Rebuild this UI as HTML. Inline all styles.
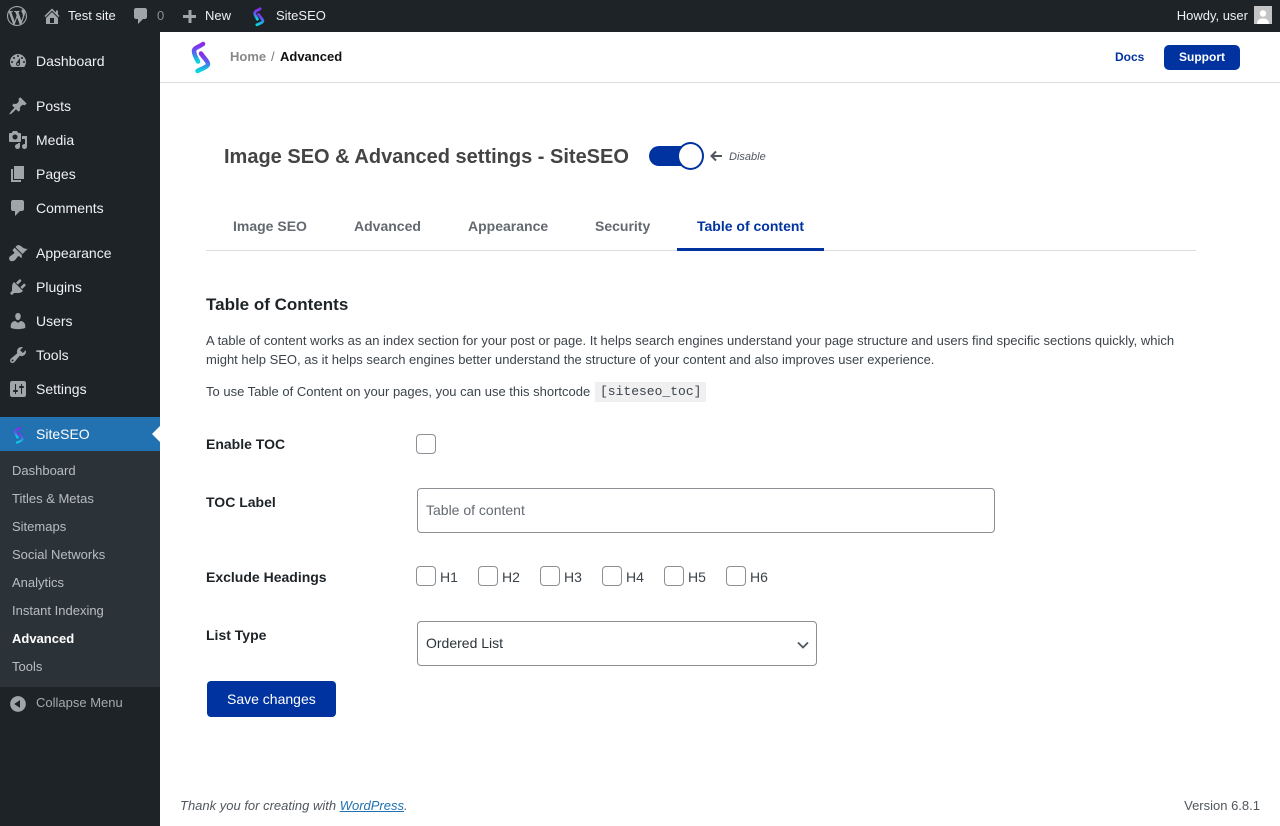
<!DOCTYPE html>
<html lang="en"><head><meta charset="utf-8"><title>SiteSEO</title>
<style>
html,body{margin:0;padding:0;width:1280px;height:826px;overflow:hidden;background:#fff;font-family:"Liberation Sans",sans-serif;}
.t{position:absolute;white-space:nowrap;line-height:20px;}
svg{position:absolute;display:block;}
.bar{position:absolute;left:0;top:0;width:1280px;height:32px;background:#1d2327;}
.side{position:absolute;left:0;top:32px;width:160px;height:794px;background:#1d2327;}
.b{font-size:13px;color:#f0f0f1;}
.m{font-size:14px;color:#f0f0f1;left:36px;}
.s{font-size:13px;color:rgba(240,246,252,.7);left:12px;}
.i{fill:#a0a5aa;}
.tab{font-size:14px;font-weight:700;color:#646970;}
.lab{font-size:14px;font-weight:700;color:#1d2327;left:206px;}
.cb{position:absolute;width:18px;height:18px;border:1px solid #8c8f94;border-radius:4px;background:#fff;}
.h{font-size:14px;color:#3c434a;}
.box{position:absolute;box-sizing:border-box;border:1px solid #8c8f94;border-radius:4px;background:#fff;}
.p{font-size:13px;color:#3c434a;left:206px;}
</style></head><body>
<svg width="0" height="0" style="position:absolute"><defs>
<linearGradient id="g" x1="0" y1="0" x2="0" y2="1"><stop offset="0" stop-color="#8a2be8"/><stop offset=".45" stop-color="#5a5cf0"/><stop offset="1" stop-color="#05d8e0"/></linearGradient>
</defs></svg>

<div class="bar"></div>
<svg style="left:7px;top:6px" width="20" height="20" viewBox="0 0 20 20"><path class="i" d="M20 10c0-5.51-4.49-10-10-10C4.48 0 0 4.49 0 10c0 5.52 4.48 10 10 10 5.51 0 10-4.48 10-10zM7.78 15.37L4.37 6.22c.55-.02 1.17-.08 1.17-.08.5-.06.44-1.13-.06-1.11 0 0-1.45.11-2.37.11-.18 0-.37 0-.58-.01C4.12 2.69 6.87 1.11 10 1.11c2.33 0 4.45.87 6.05 2.34-.68-.11-1.65.39-1.65 1.58 0 .74.45 1.36.9 2.1.35.61.55 1.36.55 2.46 0 1.49-1.4 5-1.4 5l-3.03-8.37c.54-.02.82-.17.82-.17.5-.05.44-1.25-.06-1.22 0 0-1.44.12-2.38.12-.87 0-2.33-.12-2.33-.12-.5-.03-.56 1.2-.06 1.22l.92.08 1.26 3.41zM17.41 10c.24-.64.74-1.87.43-4.25.7 1.29 1.05 2.71 1.05 4.25 0 3.29-1.73 6.24-4.4 7.78.97-2.59 1.94-5.2 2.92-7.78zM6.1 18.09C3.12 16.65 1.11 13.53 1.11 10c0-1.3.23-2.48.72-3.59C3.25 10.3 4.67 14.2 6.1 18.09zm4.03-6.63l2.58 6.98c-.86.29-1.76.45-2.71.45-.79 0-1.57-.11-2.29-.33.81-2.38 1.62-4.74 2.42-7.1z"/></svg>
<svg style="left:42px;top:6px" width="20" height="20" viewBox="0 0 20 20"><path class="i" fill-rule="evenodd" d="M16 8.5l1.53 1.53-1.06 1.06L10 4.62l-6.47 6.47-1.06-1.06L10 2.5l4 4v-2h2v4zm-6-2.46l6 5.99V18H4v-5.97zM12 17v-5H8v5h4z"/></svg>
<div class="t b" style="left:68px;top:6px">Test site</div>
<svg style="left:131px;top:6px" width="20" height="20" viewBox="0 0 20 20"><path class="i" d="M5 2h9c1.1 0 2 .9 2 2v7c0 1.1-.9 2-2 2h-2l-5 5v-5H5c-1.1 0-2-.9-2-2V4c0-1.1.9-2 2-2z"/></svg>
<div class="t b" style="left:157px;top:6px;color:#8c8f94">0</div>
<svg style="left:180px;top:7px" width="20" height="20" viewBox="0 0 20 20"><path class="i" d="M11.500 3v5h4.500v3h-4.500v5h-3v-5H3V8h5.500V3z"/></svg>
<div class="t b" style="left:205px;top:6px">New</div>
<svg style="left:250px;top:6px" width="17" height="21" viewBox="0 0 30 38"><g fill="none" stroke="url(#g)" stroke-width="5" stroke-linecap="round" stroke-linejoin="round"><path d="M18 5 C14 8 8 9 8 13 C8 16 11 20 13 24"/><path d="M15 15 C17 19 23 24 23 27 C23 30 16 32 12 34"/></g></svg>
<div class="t b" style="left:276px;top:6px">SiteSEO</div>
<div class="t b" style="right:32px;top:6px">Howdy, user</div>
<div style="position:absolute;left:1254px;top:6px;width:18px;height:18px;background:#c4c4c4;overflow:hidden;border:0">
  <svg style="left:0;top:0" width="18" height="18" viewBox="0 0 18 18"><circle cx="9" cy="7.500" r="3.200" fill="#fff"/><path d="M3 18c0-4 2.500-5.500 6-5.500s6 1.500 6 5.500z" fill="#fff"/></svg>
</div>

<div class="side"></div>
<svg style="left:8px;top:51px" width="20" height="20" viewBox="0 0 20 20"><path class="i" fill-rule="evenodd" d="M3.760 16h12.480c1.100-1.370 1.760-3.110 1.760-5 0-4.420-3.580-8-8-8s-8 3.580-8 8c0 1.890.66 3.630 1.760 5zM10 4c.55 0 1 .45 1 1s-.45 1-1 1-1-.45-1-1 .45-1 1-1zM6 6c.55 0 1 .45 1 1s-.45 1-1 1-1-.45-1-1 .45-1 1-1zm8 0c.55 0 1 .45 1 1s-.45 1-1 1-1-.45-1-1 .45-1 1-1zm-5.370 5.550L12 7v6c0 1.100-.9 2-2 2s-2-.9-2-2c0-.57.24-1.080.63-1.450zM4 10c.55 0 1 .45 1 1s-.45 1-1 1-1-.45-1-1 .45-1 1-1zm12 0c.55 0 1 .45 1 1s-.45 1-1 1-1-.45-1-1 .45-1 1-1zm-5 3c0-.55-.45-1-1-1s-1 .45-1 1 .45 1 1 1 1-.45 1-1z"/></svg>
<div class="t m" style="top:51px">Dashboard</div>
<svg style="left:8px;top:96px" width="20" height="20" viewBox="0 0 20 20"><path class="i" d="M10.440 3.020l1.820-1.820 6.360 6.350-1.830 1.820c-1.050-.68-2.480-.57-3.410.36l-.75.75c-.92.93-1.040 2.350-.35 3.410l-1.830 1.820-2.410-2.410-2.800 2.790c-.42.42-3.380 2.710-3.800 2.290s1.860-3.390 2.280-3.810l2.790-2.790L4.100 9.360l1.830-1.820c1.050.69 2.480.57 3.400-.36l.75-.75c.93-.92 1.050-2.350.36-3.410z"/></svg>
<div class="t m" style="top:96px">Posts</div>
<svg style="left:8px;top:130px" width="20" height="20" viewBox="0 0 20 20"><path class="i" fill-rule="evenodd" d="M13 11V4c0-.55-.45-1-1-1h-1.670L9 1H5L3.670 3H2c-.55 0-1 .45-1 1v7c0 .55.45 1 1 1h10c.55 0 1-.45 1-1zM7 4.500c1.380 0 2.500 1.120 2.500 2.500S8.380 9.500 7 9.500 4.500 8.380 4.500 7 5.620 4.500 7 4.500zM14 6h5v10.500c0 1.380-1.120 2.500-2.500 2.500S14 17.880 14 16.500s1.120-2.500 2.500-2.500c.17 0 .34.02.5.05V9h-3V6zm-4 8.050V13h2v3.500c0 1.380-1.120 2.500-2.500 2.500S7 17.880 7 16.500 8.120 14 9.500 14c.17 0 .34.02.5.05z"/></svg>
<div class="t m" style="top:130px">Media</div>
<svg style="left:8px;top:164px" width="20" height="20" viewBox="0 0 20 20"><path class="i" d="M6 15V2h10v13H6zm-1 1h8v2H3V5h2v11z"/></svg>
<div class="t m" style="top:164px">Pages</div>
<svg style="left:8px;top:198px" width="20" height="20" viewBox="0 0 20 20"><path class="i" d="M5 2h9c1.100 0 2 .9 2 2v7c0 1.100-.9 2-2 2h-2l-5 5v-5H5c-1.100 0-2-.9-2-2V4c0-1.100.9-2 2-2z"/></svg>
<div class="t m" style="top:198px">Comments</div>
<svg style="left:8px;top:243px" width="20" height="20" viewBox="0 0 20 20"><path class="i" d="M14.480 11.060L7.410 3.990l1.500-1.500c.5-.56 2.300-.47 3.510.32 1.210.8 1.430 1.280 2.910 2.100 1.180.64 2.450 1.260 4.450.85zm-.71.71L6.700 4.700 4.930 6.470c-.39.39-.39 1.020 0 1.410l1.060 1.060c.39.39.39 1.030 0 1.420-.6.6-1.430 1.110-2.210 1.690-.35.26-.7.53-1.010.84C1.430 13.230.99 14.780 1.200 16.070c.1.640.38 1.120.67 1.430.31.31.79.59 1.430.67 1.290.21 2.840-.23 4.170-1.570.31-.31.58-.66.84-1.010.58-.78 1.090-1.610 1.690-2.210.39-.39 1.030-.39 1.420 0l1.060 1.060c.39.39 1.020.39 1.410 0z"/></svg>
<div class="t m" style="top:243px">Appearance</div>
<svg style="left:8px;top:277px" width="20" height="20" viewBox="0 0 20 20"><path class="i" d="M13.110 4.360L9.870 7.600 8 5.730l3.240-3.240c.35-.34 1.050-.2 1.560.32.52.51.66 1.210.31 1.550zm-8 1.770l.91-1.120 9.010 9.010-1.190.84c-.71.71-2.630 1.160-3.820 1.160H6.140L4.900 17.260c-.59.59-1.540.59-2.120 0-.59-.58-.59-1.530 0-2.120l1.240-1.240v-3.880c0-1.130.4-3.190 1.090-3.890zm7.260 3.970l3.240-3.240c.34-.35 1.040-.21 1.550.31.52.51.66 1.210.31 1.550l-3.240 3.250z"/></svg>
<div class="t m" style="top:277px">Plugins</div>
<svg style="left:8px;top:311px" width="20" height="20" viewBox="0 0 20 20"><path class="i" d="M10 9.250c-2.270 0-2.730-3.440-2.730-3.440C7 4.020 7.820 2 9.970 2c2.160 0 2.980 2.020 2.710 3.810 0 0-.41 3.440-2.680 3.440zm0 2.570L12.720 10c2.390 0 4.520 2.330 4.520 4.530v2.490s-3.650 1.130-7.240 1.130c-3.650 0-7.240-1.130-7.240-1.130v-2.490c0-2.250 1.940-4.480 4.470-4.480z"/></svg>
<div class="t m" style="top:311px">Users</div>
<svg style="left:8px;top:345px" width="20" height="20" viewBox="0 0 20 20"><path class="i" fill-rule="evenodd" d="M16.680 9.770c-1.340 1.340-3.300 1.670-4.950.99l-5.410 6.520c-.99.99-2.590.99-3.580 0s-.99-2.590 0-3.570l6.520-5.420c-.68-1.650-.35-3.610.99-4.950 1.280-1.280 3.120-1.620 4.720-1.060l-2.890 2.890 2.820 2.820 2.860-2.870c.53 1.580.18 3.390-1.080 4.650zM3.810 16.210c.4.39 1.040.39 1.430 0 .4-.4.4-1.040 0-1.430-.39-.4-1.030-.4-1.430 0-.39.39-.39 1.030 0 1.430z"/></svg>
<div class="t m" style="top:345px">Tools</div>
<svg style="left:8px;top:379px" width="20" height="20" viewBox="0 0 20 20"><path class="i" fill-rule="evenodd" d="M18 16V4c0-1.100-.9-2-2-2H4c-1.100 0-2 .9-2 2v12c0 1.100.9 2 2 2h12c1.100 0 2-.9 2-2zM8 11h1c.55 0 1 .45 1 1s-.45 1-1 1H8v1.500c0 .28-.22.5-.5.5s-.5-.22-.5-.5V13H6c-.55 0-1-.45-1-1s.45-1 1-1h1V5.500c0-.28.22-.5.5-.5s.5.22.5.5V11zm5-2h-1c-.55 0-1-.45-1-1s.45-1 1-1h1V5.500c0-.28.22-.5.5-.5s.5.22.5.5V7h1c.55 0 1 .45 1 1s-.45 1-1 1h-1v5.500c0 .28-.22.5-.5.5s-.5-.22-.5-.5V9z"/></svg>
<div class="t m" style="top:379px">Settings</div>
<div style="position:absolute;left:0;top:417px;width:160px;height:34px;background:#2271b1"></div>
<svg style="left:11px;top:425px" width="15" height="20" viewBox="0 0 30 38"><g fill="none" stroke="url(#g)" stroke-width="4.500" stroke-linecap="round" stroke-linejoin="round"><path d="M18 5 C14 8 8 9 8 13 C8 16 11 20 13 24"/><path d="M15 15 C17 19 23 24 23 27 C23 30 16 32 12 34"/></g></svg>
<div class="t m" style="top:424px;color:#fff">SiteSEO</div>
<div style="position:absolute;left:152px;top:426px;width:0;height:0;border:8px solid transparent;border-left:0;border-right-color:#fff"></div>
<div style="position:absolute;left:0;top:451px;width:160px;height:236px;background:#2c3338"></div>
<div class="t s" style="top:461px">Dashboard</div>
<div class="t s" style="top:489px">Titles &amp; Metas</div>
<div class="t s" style="top:517px">Sitemaps</div>
<div class="t s" style="top:545px">Social Networks</div>
<div class="t s" style="top:573px">Analytics</div>
<div class="t s" style="top:601px">Instant Indexing</div>
<div class="t s" style="top:629px;color:#fff;font-weight:700">Advanced</div>
<div class="t s" style="top:657px">Tools</div>
<svg style="left:8px;top:694px" width="20" height="20" viewBox="0 0 20 20"><path class="i" fill-rule="evenodd" d="M10 2.160c4.330 0 7.840 3.510 7.840 7.840s-3.510 7.840-7.840 7.840S2.160 14.330 2.160 10 5.710 2.160 10 2.160zm2 11.720V6.120L6.180 9.970z"/></svg>
<div class="t s" style="left:36px;top:693px;color:#a7aaad">Collapse Menu</div>

<div style="position:absolute;left:160px;top:32px;width:1120px;height:50px;background:#fff;border-bottom:1px solid #dcdcde"></div>
<svg style="left:185px;top:38px" width="30" height="38" viewBox="0 0 30 38"><g fill="none" stroke="url(#g)" stroke-width="4.500" stroke-linecap="round" stroke-linejoin="round"><path d="M18 6 C14 9 9 9.500 9 13 C9 16 11 20 13 23.500"/><path d="M16 15.500 C18 19 23 23 23 26 C23 29 16 31 12.500 33"/></g></svg>
<div class="t" style="left:230px;top:47px;font-size:13px;font-weight:700;color:#888">Home</div>
<div class="t" style="left:271px;top:47px;font-size:13px;color:#777">/</div>
<div class="t" style="left:280px;top:47px;font-size:13px;font-weight:700;color:#111">Advanced</div>
<div class="t" style="left:1115px;top:47px;font-size:12px;font-weight:700;color:#0033a0">Docs</div>
<div style="position:absolute;left:1164px;top:45px;width:76px;height:25px;background:#0033a0;border-radius:5px"></div>
<div class="t" style="left:1179px;top:47px;font-size:12px;font-weight:700;color:#fff">Support</div>

<div class="t" style="left:224px;top:145px;line-height:24px;font-size:20px;font-weight:700;color:#444">Image SEO &amp; Advanced settings - SiteSEO</div>
<div style="position:absolute;left:649px;top:146px;width:44px;height:20px;border-radius:10px;background:#0033a0"></div>
<div style="position:absolute;box-sizing:border-box;left:677px;top:142px;width:27px;height:28px;border-radius:50%;background:#fff;border:2px solid #0033a0"></div>
<svg style="left:709px;top:149px" width="14" height="14" viewBox="0 0 14 14"><path d="M13 7H3M7 2.500L2.500 7 7 11.500" fill="none" stroke="#50575e" stroke-width="2"/></svg>
<div class="t" style="left:729px;top:147px;font-size:11px;font-style:italic;color:#50575e">Disable</div>

<div class="t tab" style="left:233px;top:216px">Image SEO</div>
<div class="t tab" style="left:354px;top:216px">Advanced</div>
<div class="t tab" style="left:468px;top:216px">Appearance</div>
<div class="t tab" style="left:595px;top:216px">Security</div>
<div class="t tab" style="left:697px;top:216px;color:#0033a0">Table of content</div>
<div style="position:absolute;left:206px;top:250px;width:990px;height:1px;background:#dcdcde"></div>
<div style="position:absolute;left:677px;top:248px;width:147px;height:3px;background:#0033a0"></div>

<div class="t" style="left:206px;top:295px;font-size:17px;font-weight:700;color:#1d2327">Table of Contents</div>
<div class="t p" style="top:331px">A table of content works as an index section for your post or page. It helps search engines understand your page structure and users find specific sections quickly, which</div>
<div class="t p" style="top:350px">might help SEO, as it helps search engines better understand the structure of your content and also improves user experience.</div>
<div class="t p" style="top:382px">To use Table of Content on your pages, you can use this shortcode</div>
<div class="t" style="left:595px;top:382px;width:101px;padding:0 5px;height:20px;background:#f0f0f1;font:13px/20px 'Liberation Mono',monospace;color:#3c434a">[siteseo_toc]</div>

<div class="t lab" style="top:434px">Enable TOC</div>
<div class="cb" style="left:416px;top:434px"></div>
<div class="t lab" style="top:492px">TOC Label</div>
<div class="box" style="left:417px;top:488px;width:578px;height:45px"></div>
<div class="t" style="left:426px;top:500px;font-size:14px;color:#646970">Table of content</div>
<div class="t lab" style="top:567px">Exclude Headings</div>
<div class="cb" style="left:416px;top:566px"></div><div class="t h" style="left:440px;top:567px">H1</div>
<div class="cb" style="left:478px;top:566px"></div><div class="t h" style="left:502px;top:567px">H2</div>
<div class="cb" style="left:540px;top:566px"></div><div class="t h" style="left:564px;top:567px">H3</div>
<div class="cb" style="left:602px;top:566px"></div><div class="t h" style="left:626px;top:567px">H4</div>
<div class="cb" style="left:664px;top:566px"></div><div class="t h" style="left:688px;top:567px">H5</div>
<div class="cb" style="left:726px;top:566px"></div><div class="t h" style="left:750px;top:567px">H6</div>
<div class="t lab" style="top:625px">List Type</div>
<div class="box" style="left:417px;top:621px;width:400px;height:45px"></div>
<div class="t" style="left:426px;top:633px;font-size:14px;color:#2c3338">Ordered List</div>
<svg style="left:796px;top:640px" width="14" height="10" viewBox="0 0 14 10"><path d="M2 2.500L7 7.500 12 2.500" fill="none" stroke="#50575e" stroke-width="1.800"/></svg>
<div style="position:absolute;left:207px;top:681px;width:129px;height:36px;background:#0033a0;border-radius:4px"></div>
<div class="t" style="left:227px;top:689px;font-size:14px;color:#fff">Save changes</div>

<div class="t" style="left:180px;top:796px;font-size:13px;font-style:italic;color:#50575e">Thank you for creating with <span style="color:#2271b1;text-decoration:underline">WordPress</span>.</div>
<div class="t" style="right:20px;top:796px;font-size:13px;color:#50575e">Version 6.8.1</div>
</body></html>
